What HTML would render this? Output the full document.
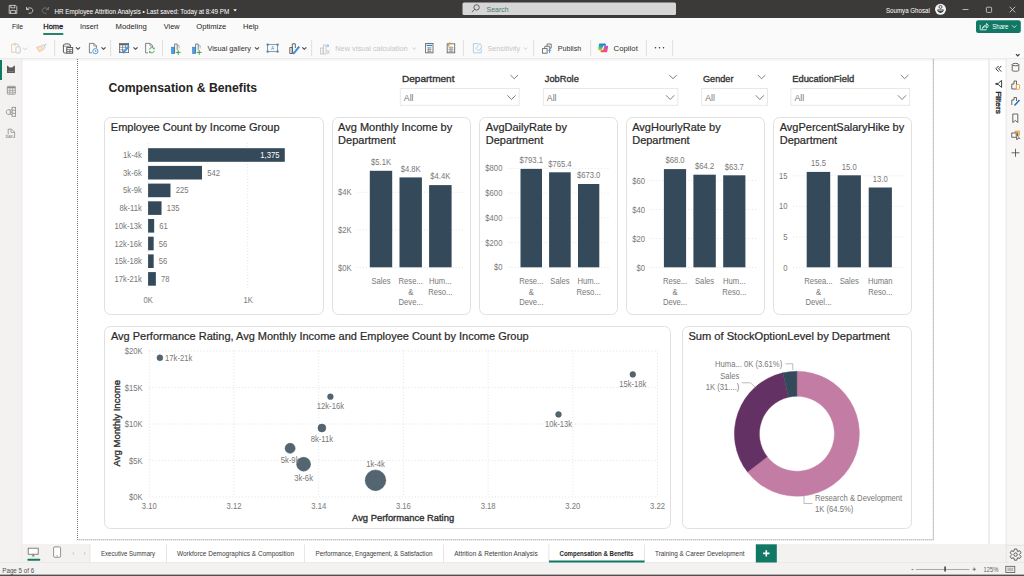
<!DOCTYPE html>
<html><head><meta charset="utf-8"><style>
html,body{margin:0;padding:0;width:1024px;height:576px;overflow:hidden;background:#fff;}
svg{display:block;font-family:"Liberation Sans", sans-serif;}
</style></head><body>
<svg width="1024" height="576" viewBox="0 0 1024 576">
<rect x="0" y="0" width="1024" height="576" fill="#ffffff" />
<rect x="0" y="0" width="1024" height="18" fill="#3b3a39" />
<rect x="0" y="18" width="1024" height="40" fill="#fafafa" />
<rect x="0" y="58.2" width="1024" height="1.2" fill="#e6e6e6" />
<rect x="0" y="59.4" width="1024" height="1.2" fill="#f4f4f4" />
<rect x="0" y="59" width="22" height="504" fill="#f3f2f1" />
<rect x="0" y="60" width="2" height="20" fill="#117865" />
<rect x="21.5" y="59" width="0.8" height="504" fill="#e6e4e2" />
<rect x="988.3" y="59" width="1.3" height="485" fill="#e6e4e2" />
<rect x="1006" y="59" width="18" height="485" fill="#f8f7f6" />
<rect x="1005.6" y="59" width="1.1" height="485" fill="#ebe9e7" />
<rect x="22" y="544" width="1002" height="18.5" fill="#f3f2f1" />
<rect x="90" y="544" width="686" height="18.5" fill="#ffffff" />
<rect x="0" y="562.5" width="1024" height="13" fill="#f3f2f1" />
<rect x="1005.8" y="544" width="0.9" height="18.5" fill="#e4e2e0" />
<rect x="1006" y="545.2" width="18" height="0.8" fill="#e4e2e0" />
<rect x="0" y="562" width="1024" height="0.7" fill="#e6e6e6" />
<rect x="0" y="574.6" width="1024" height="1.4" fill="#505050" />
<path d="M77.5 59 V539.8 H933.3 V59" fill="none" stroke="#7a7a7a" stroke-width="1" stroke-dasharray="1 1"/>
<text x="108.40" y="91.57" font-size="12.2" fill="#252423" text-anchor="start" font-weight="bold" textLength="148.80" lengthAdjust="spacingAndGlyphs" >Compensation &amp; Benefits</text>
<text x="402" y="81.8" font-size="9.4" fill="#333" stroke="#333" stroke-width="0.35" textLength="52.5" lengthAdjust="spacingAndGlyphs">Department</text>
<path d="M510.4 75 L514.1999999999999 78.7 L518.0 75" fill="none" stroke="#605e5c" stroke-width="0.8"/>
<rect x="400.3" y="88.5" width="118.90000000000003" height="16.8" fill="#fff" stroke="#e8e8e8" stroke-width="1"/>
<text x="403.80" y="100.95" font-size="8.8" fill="#797775" text-anchor="start" >All</text>
<path d="M507.40000000000003 95.3 L511.50000000000006 99.5 L515.6 95.3" fill="none" stroke="#605e5c" stroke-width="0.8"/>
<text x="544.8" y="81.8" font-size="9.4" fill="#333" stroke="#333" stroke-width="0.35" textLength="34" lengthAdjust="spacingAndGlyphs">JobRole</text>
<path d="M669.2 75 L673.0 78.7 L676.8000000000001 75" fill="none" stroke="#605e5c" stroke-width="0.8"/>
<rect x="543.3" y="88.5" width="134.60000000000002" height="16.8" fill="#fff" stroke="#e8e8e8" stroke-width="1"/>
<text x="546.80" y="100.95" font-size="8.8" fill="#797775" text-anchor="start" >All</text>
<path d="M666.1 95.3 L670.1999999999999 99.5 L674.3 95.3" fill="none" stroke="#605e5c" stroke-width="0.8"/>
<text x="703" y="81.8" font-size="9.4" fill="#333" stroke="#333" stroke-width="0.35" textLength="30.5" lengthAdjust="spacingAndGlyphs">Gender</text>
<path d="M757.8 75 L761.5999999999999 78.7 L765.4 75" fill="none" stroke="#605e5c" stroke-width="0.8"/>
<rect x="701.7" y="88.5" width="65.79999999999995" height="16.8" fill="#fff" stroke="#e8e8e8" stroke-width="1"/>
<text x="705.20" y="100.95" font-size="8.8" fill="#797775" text-anchor="start" >All</text>
<path d="M755.7 95.3 L759.8 99.5 L763.9 95.3" fill="none" stroke="#605e5c" stroke-width="0.8"/>
<text x="792.2" y="81.8" font-size="9.4" fill="#333" stroke="#333" stroke-width="0.35" textLength="62" lengthAdjust="spacingAndGlyphs">EducationField</text>
<path d="M900.8 75 L904.5999999999999 78.7 L908.4 75" fill="none" stroke="#605e5c" stroke-width="0.8"/>
<rect x="790.9" y="88.5" width="118.80000000000007" height="16.8" fill="#fff" stroke="#e8e8e8" stroke-width="1"/>
<text x="794.40" y="100.95" font-size="8.8" fill="#797775" text-anchor="start" >All</text>
<path d="M897.9000000000001 95.3 L902.0 99.5 L906.1 95.3" fill="none" stroke="#605e5c" stroke-width="0.8"/>
<rect x="104.5" y="117.5" width="219" height="197" rx="6" fill="#fff" stroke="#e0e0e0" stroke-width="1"/>
<rect x="332.5" y="117.5" width="138" height="197" rx="6" fill="#fff" stroke="#e0e0e0" stroke-width="1"/>
<rect x="479.5" y="117.5" width="138" height="197" rx="6" fill="#fff" stroke="#e0e0e0" stroke-width="1"/>
<rect x="626.5" y="117.5" width="138" height="197" rx="6" fill="#fff" stroke="#e0e0e0" stroke-width="1"/>
<rect x="773.5" y="117.5" width="138" height="197" rx="6" fill="#fff" stroke="#e0e0e0" stroke-width="1"/>
<rect x="104.5" y="326.5" width="566" height="202" rx="6" fill="#fff" stroke="#e0e0e0" stroke-width="1"/>
<rect x="682.5" y="326.5" width="229" height="202" rx="6" fill="#fff" stroke="#e0e0e0" stroke-width="1"/>
<text x="110.80" y="130.84" font-size="11" fill="#2b2a29" text-anchor="start" stroke="#2b2a29" stroke-width="0.22">Employee Count by Income Group</text>
<path d="M148.1 143 V290" stroke="#dcdcdc" stroke-width="0.8" stroke-dasharray="1 2"/>
<path d="M247.7 143 V290" stroke="#dcdcdc" stroke-width="0.8" stroke-dasharray="1 2"/>
<rect x="148.1" y="148.2" width="136.68" height="13.6" fill="#344959" />
<text x="141.80" y="158.08" font-size="8.6" fill="#787878" text-anchor="end" textLength="18.72" lengthAdjust="spacingAndGlyphs" >1k-4k</text>
<text x="279.50" y="158.08" font-size="8.6" fill="#ffffff" text-anchor="end" textLength="19.15" lengthAdjust="spacingAndGlyphs" >1,375</text>
<rect x="148.1" y="165.9" width="53.87" height="13.6" fill="#344959" />
<text x="141.80" y="175.78" font-size="8.6" fill="#787878" text-anchor="end" textLength="18.72" lengthAdjust="spacingAndGlyphs" >3k-6k</text>
<text x="207.17" y="175.78" font-size="8.6" fill="#787878" text-anchor="start" textLength="12.77" lengthAdjust="spacingAndGlyphs" >542</text>
<rect x="148.1" y="183.6" width="22.37" height="13.6" fill="#344959" />
<text x="141.80" y="193.48" font-size="8.6" fill="#787878" text-anchor="end" textLength="18.72" lengthAdjust="spacingAndGlyphs" >5k-9k</text>
<text x="175.66" y="193.48" font-size="8.6" fill="#787878" text-anchor="start" textLength="12.77" lengthAdjust="spacingAndGlyphs" >225</text>
<rect x="148.1" y="201.3" width="13.42" height="13.6" fill="#344959" />
<text x="141.80" y="211.18" font-size="8.6" fill="#787878" text-anchor="end" textLength="22.40" lengthAdjust="spacingAndGlyphs" >8k-11k</text>
<text x="166.72" y="211.18" font-size="8.6" fill="#787878" text-anchor="start" textLength="12.77" lengthAdjust="spacingAndGlyphs" >135</text>
<rect x="148.1" y="219.0" width="6.06" height="13.6" fill="#344959" />
<text x="141.80" y="228.88" font-size="8.6" fill="#787878" text-anchor="end" textLength="27.23" lengthAdjust="spacingAndGlyphs" >10k-13k</text>
<text x="159.36" y="228.88" font-size="8.6" fill="#787878" text-anchor="start" textLength="8.51" lengthAdjust="spacingAndGlyphs" >61</text>
<rect x="148.1" y="236.7" width="5.57" height="13.6" fill="#344959" />
<text x="141.80" y="246.58" font-size="8.6" fill="#787878" text-anchor="end" textLength="27.23" lengthAdjust="spacingAndGlyphs" >12k-16k</text>
<text x="158.87" y="246.58" font-size="8.6" fill="#787878" text-anchor="start" textLength="8.51" lengthAdjust="spacingAndGlyphs" >56</text>
<rect x="148.1" y="254.4" width="5.57" height="13.6" fill="#344959" />
<text x="141.80" y="264.28" font-size="8.6" fill="#787878" text-anchor="end" textLength="27.23" lengthAdjust="spacingAndGlyphs" >15k-18k</text>
<text x="158.87" y="264.28" font-size="8.6" fill="#787878" text-anchor="start" textLength="8.51" lengthAdjust="spacingAndGlyphs" >56</text>
<rect x="148.1" y="272.1" width="7.75" height="13.6" fill="#344959" />
<text x="141.80" y="281.98" font-size="8.6" fill="#787878" text-anchor="end" textLength="27.23" lengthAdjust="spacingAndGlyphs" >17k-21k</text>
<text x="161.05" y="281.98" font-size="8.6" fill="#787878" text-anchor="start" textLength="8.51" lengthAdjust="spacingAndGlyphs" >78</text>
<text x="148.30" y="303.08" font-size="8.6" fill="#787878" text-anchor="middle" textLength="9.36" lengthAdjust="spacingAndGlyphs" >0K</text>
<text x="248.30" y="303.08" font-size="8.6" fill="#787878" text-anchor="middle" textLength="9.36" lengthAdjust="spacingAndGlyphs" >1K</text>
<text x="338.10" y="130.84" font-size="11" fill="#2b2a29" text-anchor="start" stroke="#2b2a29" stroke-width="0.22">Avg Monthly Income by</text>
<text x="338.10" y="143.84" font-size="11" fill="#2b2a29" text-anchor="start" stroke="#2b2a29" stroke-width="0.22">Department</text>
<path d="M356.6 192.3 H463" stroke="#dcdcdc" stroke-width="0.8" stroke-dasharray="1 2.2"/>
<text x="351.50" y="195.38" font-size="8.6" fill="#787878" text-anchor="end" textLength="13.62" lengthAdjust="spacingAndGlyphs" >$4K</text>
<path d="M356.6 229.9 H463" stroke="#dcdcdc" stroke-width="0.8" stroke-dasharray="1 2.2"/>
<text x="351.50" y="232.98" font-size="8.6" fill="#787878" text-anchor="end" textLength="13.62" lengthAdjust="spacingAndGlyphs" >$2K</text>
<path d="M356.6 267.5 H463" stroke="#dcdcdc" stroke-width="0.8" stroke-dasharray="1 2.2"/>
<text x="351.50" y="270.58" font-size="8.6" fill="#787878" text-anchor="end" textLength="13.62" lengthAdjust="spacingAndGlyphs" >$0K</text>
<rect x="369.8" y="170.8" width="22.4" height="96.5" fill="#344959" />
<text x="381.00" y="165.18" font-size="8.6" fill="#787878" text-anchor="middle" textLength="20.00" lengthAdjust="spacingAndGlyphs" >$5.1K</text>
<text x="381.00" y="284.08" font-size="8.6" fill="#787878" text-anchor="middle" textLength="19.15" lengthAdjust="spacingAndGlyphs" >Sales</text>
<rect x="399.5" y="177.4" width="22.4" height="89.9" fill="#344959" />
<text x="410.70" y="171.78" font-size="8.6" fill="#787878" text-anchor="middle" textLength="20.00" lengthAdjust="spacingAndGlyphs" >$4.8K</text>
<text x="410.70" y="284.08" font-size="8.6" fill="#787878" text-anchor="middle" textLength="24.25" lengthAdjust="spacingAndGlyphs" >Rese...</text>
<text x="410.70" y="294.68" font-size="8.6" fill="#787878" text-anchor="middle" textLength="5.11" lengthAdjust="spacingAndGlyphs" >&amp;</text>
<text x="410.70" y="305.28" font-size="8.6" fill="#787878" text-anchor="middle" textLength="24.25" lengthAdjust="spacingAndGlyphs" >Deve...</text>
<rect x="429.1" y="185.1" width="22.5" height="82.2" fill="#344959" />
<text x="440.35" y="179.48" font-size="8.6" fill="#787878" text-anchor="middle" textLength="20.00" lengthAdjust="spacingAndGlyphs" >$4.4K</text>
<text x="440.35" y="284.08" font-size="8.6" fill="#787878" text-anchor="middle" textLength="22.54" lengthAdjust="spacingAndGlyphs" >Hum...</text>
<text x="440.35" y="294.68" font-size="8.6" fill="#787878" text-anchor="middle" textLength="24.25" lengthAdjust="spacingAndGlyphs" >Reso...</text>
<text x="485.80" y="130.84" font-size="11" fill="#2b2a29" text-anchor="start" stroke="#2b2a29" stroke-width="0.22">AvgDailyRate by</text>
<text x="485.80" y="143.84" font-size="11" fill="#2b2a29" text-anchor="start" stroke="#2b2a29" stroke-width="0.22">Department</text>
<path d="M508.3 168.4 H610.5" stroke="#dcdcdc" stroke-width="0.8" stroke-dasharray="1 2.2"/>
<text x="502.40" y="171.48" font-size="8.6" fill="#787878" text-anchor="end" textLength="17.03" lengthAdjust="spacingAndGlyphs" >$800</text>
<path d="M508.3 193.1 H610.5" stroke="#dcdcdc" stroke-width="0.8" stroke-dasharray="1 2.2"/>
<text x="502.40" y="196.18" font-size="8.6" fill="#787878" text-anchor="end" textLength="17.03" lengthAdjust="spacingAndGlyphs" >$600</text>
<path d="M508.3 217.8 H610.5" stroke="#dcdcdc" stroke-width="0.8" stroke-dasharray="1 2.2"/>
<text x="502.40" y="220.88" font-size="8.6" fill="#787878" text-anchor="end" textLength="17.03" lengthAdjust="spacingAndGlyphs" >$400</text>
<path d="M508.3 242.6 H610.5" stroke="#dcdcdc" stroke-width="0.8" stroke-dasharray="1 2.2"/>
<text x="502.40" y="245.68" font-size="8.6" fill="#787878" text-anchor="end" textLength="17.03" lengthAdjust="spacingAndGlyphs" >$200</text>
<path d="M508.3 267.4 H610.5" stroke="#dcdcdc" stroke-width="0.8" stroke-dasharray="1 2.2"/>
<text x="502.40" y="270.48" font-size="8.6" fill="#787878" text-anchor="end" textLength="8.51" lengthAdjust="spacingAndGlyphs" >$0</text>
<rect x="520.5" y="168.9" width="21.5" height="98.4" fill="#344959" />
<text x="531.25" y="163.28" font-size="8.6" fill="#787878" text-anchor="middle" textLength="23.41" lengthAdjust="spacingAndGlyphs" >$793.1</text>
<text x="531.25" y="284.08" font-size="8.6" fill="#787878" text-anchor="middle" textLength="24.25" lengthAdjust="spacingAndGlyphs" >Rese...</text>
<text x="531.25" y="294.68" font-size="8.6" fill="#787878" text-anchor="middle" textLength="5.11" lengthAdjust="spacingAndGlyphs" >&amp;</text>
<text x="531.25" y="305.28" font-size="8.6" fill="#787878" text-anchor="middle" textLength="24.25" lengthAdjust="spacingAndGlyphs" >Deve...</text>
<rect x="549.1" y="172.3" width="21.6" height="95.0" fill="#344959" />
<text x="559.90" y="166.68" font-size="8.6" fill="#787878" text-anchor="middle" textLength="23.41" lengthAdjust="spacingAndGlyphs" >$765.4</text>
<text x="559.90" y="284.08" font-size="8.6" fill="#787878" text-anchor="middle" textLength="19.15" lengthAdjust="spacingAndGlyphs" >Sales</text>
<rect x="578" y="184" width="21.3" height="83.3" fill="#344959" />
<text x="588.65" y="178.38" font-size="8.6" fill="#787878" text-anchor="middle" textLength="23.41" lengthAdjust="spacingAndGlyphs" >$673.0</text>
<text x="588.65" y="284.08" font-size="8.6" fill="#787878" text-anchor="middle" textLength="22.54" lengthAdjust="spacingAndGlyphs" >Hum...</text>
<text x="588.65" y="294.68" font-size="8.6" fill="#787878" text-anchor="middle" textLength="24.25" lengthAdjust="spacingAndGlyphs" >Reso...</text>
<text x="632.20" y="130.84" font-size="11" fill="#2b2a29" text-anchor="start" stroke="#2b2a29" stroke-width="0.22">AvgHourlyRate by</text>
<text x="632.20" y="143.84" font-size="11" fill="#2b2a29" text-anchor="start" stroke="#2b2a29" stroke-width="0.22">Department</text>
<path d="M649.5 180.5 H757" stroke="#dcdcdc" stroke-width="0.8" stroke-dasharray="1 2.2"/>
<text x="644.90" y="183.58" font-size="8.6" fill="#787878" text-anchor="end" textLength="12.77" lengthAdjust="spacingAndGlyphs" >$60</text>
<path d="M649.5 209.5 H757" stroke="#dcdcdc" stroke-width="0.8" stroke-dasharray="1 2.2"/>
<text x="644.90" y="212.58" font-size="8.6" fill="#787878" text-anchor="end" textLength="12.77" lengthAdjust="spacingAndGlyphs" >$40</text>
<path d="M649.5 238.5 H757" stroke="#dcdcdc" stroke-width="0.8" stroke-dasharray="1 2.2"/>
<text x="644.90" y="241.58" font-size="8.6" fill="#787878" text-anchor="end" textLength="12.77" lengthAdjust="spacingAndGlyphs" >$20</text>
<path d="M649.5 267.5 H757" stroke="#dcdcdc" stroke-width="0.8" stroke-dasharray="1 2.2"/>
<text x="644.90" y="270.58" font-size="8.6" fill="#787878" text-anchor="end" textLength="8.51" lengthAdjust="spacingAndGlyphs" >$0</text>
<rect x="663.9" y="169.1" width="22.2" height="98.2" fill="#344959" />
<text x="675.00" y="163.48" font-size="8.6" fill="#787878" text-anchor="middle" textLength="19.15" lengthAdjust="spacingAndGlyphs" >$68.0</text>
<text x="675.00" y="284.08" font-size="8.6" fill="#787878" text-anchor="middle" textLength="24.25" lengthAdjust="spacingAndGlyphs" >Rese...</text>
<text x="675.00" y="294.68" font-size="8.6" fill="#787878" text-anchor="middle" textLength="5.11" lengthAdjust="spacingAndGlyphs" >&amp;</text>
<text x="675.00" y="305.28" font-size="8.6" fill="#787878" text-anchor="middle" textLength="24.25" lengthAdjust="spacingAndGlyphs" >Deve...</text>
<rect x="693.4" y="174.7" width="22.4" height="92.6" fill="#344959" />
<text x="704.60" y="169.08" font-size="8.6" fill="#787878" text-anchor="middle" textLength="19.15" lengthAdjust="spacingAndGlyphs" >$64.2</text>
<text x="704.60" y="284.08" font-size="8.6" fill="#787878" text-anchor="middle" textLength="19.15" lengthAdjust="spacingAndGlyphs" >Sales</text>
<rect x="723.2" y="175.3" width="22.2" height="92.0" fill="#344959" />
<text x="734.30" y="169.68" font-size="8.6" fill="#787878" text-anchor="middle" textLength="19.15" lengthAdjust="spacingAndGlyphs" >$63.7</text>
<text x="734.30" y="284.08" font-size="8.6" fill="#787878" text-anchor="middle" textLength="22.54" lengthAdjust="spacingAndGlyphs" >Hum...</text>
<text x="734.30" y="294.68" font-size="8.6" fill="#787878" text-anchor="middle" textLength="24.25" lengthAdjust="spacingAndGlyphs" >Reso...</text>
<text x="779.70" y="130.84" font-size="11" fill="#2b2a29" text-anchor="start" stroke="#2b2a29" stroke-width="0.22">AvgPercentSalaryHike by</text>
<text x="779.70" y="143.84" font-size="11" fill="#2b2a29" text-anchor="start" stroke="#2b2a29" stroke-width="0.22">Department</text>
<path d="M793 175.8 H905" stroke="#dcdcdc" stroke-width="0.8" stroke-dasharray="1 2.2"/>
<text x="787.60" y="178.88" font-size="8.6" fill="#787878" text-anchor="end" textLength="8.51" lengthAdjust="spacingAndGlyphs" >15</text>
<path d="M793 206.4 H905" stroke="#dcdcdc" stroke-width="0.8" stroke-dasharray="1 2.2"/>
<text x="787.60" y="209.48" font-size="8.6" fill="#787878" text-anchor="end" textLength="8.51" lengthAdjust="spacingAndGlyphs" >10</text>
<path d="M793 237 H905" stroke="#dcdcdc" stroke-width="0.8" stroke-dasharray="1 2.2"/>
<text x="787.60" y="240.08" font-size="8.6" fill="#787878" text-anchor="end" textLength="4.26" lengthAdjust="spacingAndGlyphs" >5</text>
<path d="M793 267.5 H905" stroke="#dcdcdc" stroke-width="0.8" stroke-dasharray="1 2.2"/>
<text x="787.60" y="270.58" font-size="8.6" fill="#787878" text-anchor="end" textLength="4.26" lengthAdjust="spacingAndGlyphs" >0</text>
<rect x="806.7" y="171.9" width="23.5" height="95.4" fill="#344959" />
<text x="818.45" y="166.28" font-size="8.6" fill="#787878" text-anchor="middle" textLength="14.90" lengthAdjust="spacingAndGlyphs" >15.5</text>
<text x="818.45" y="284.08" font-size="8.6" fill="#787878" text-anchor="middle" textLength="28.50" lengthAdjust="spacingAndGlyphs" >Resea...</text>
<text x="818.45" y="294.68" font-size="8.6" fill="#787878" text-anchor="middle" textLength="5.11" lengthAdjust="spacingAndGlyphs" >&amp;</text>
<text x="818.45" y="305.28" font-size="8.6" fill="#787878" text-anchor="middle" textLength="25.95" lengthAdjust="spacingAndGlyphs" >Devel...</text>
<rect x="837.7" y="175.3" width="23.2" height="92.0" fill="#344959" />
<text x="849.30" y="169.68" font-size="8.6" fill="#787878" text-anchor="middle" textLength="14.90" lengthAdjust="spacingAndGlyphs" >15.0</text>
<text x="849.30" y="284.08" font-size="8.6" fill="#787878" text-anchor="middle" textLength="19.15" lengthAdjust="spacingAndGlyphs" >Sales</text>
<rect x="868.7" y="187.5" width="23.2" height="79.8" fill="#344959" />
<text x="880.30" y="181.88" font-size="8.6" fill="#787878" text-anchor="middle" textLength="14.90" lengthAdjust="spacingAndGlyphs" >13.0</text>
<text x="880.30" y="284.08" font-size="8.6" fill="#787878" text-anchor="middle" textLength="24.67" lengthAdjust="spacingAndGlyphs" >Human</text>
<text x="880.30" y="294.68" font-size="8.6" fill="#787878" text-anchor="middle" textLength="24.25" lengthAdjust="spacingAndGlyphs" >Reso...</text>
<text x="110.90" y="339.74" font-size="11" fill="#2b2a29" text-anchor="start" stroke="#2b2a29" stroke-width="0.22">Avg Performance Rating, Avg Monthly Income and Employee Count by Income Group</text>
<path d="M149.3 350 V497" stroke="#dcdcdc" stroke-width="0.8" stroke-dasharray="1 2.2"/>
<text x="149.30" y="508.68" font-size="8.6" fill="#787878" text-anchor="middle" textLength="14.90" lengthAdjust="spacingAndGlyphs" >3.10</text>
<path d="M234.0 350 V497" stroke="#dcdcdc" stroke-width="0.8" stroke-dasharray="1 2.2"/>
<text x="234.00" y="508.68" font-size="8.6" fill="#787878" text-anchor="middle" textLength="14.90" lengthAdjust="spacingAndGlyphs" >3.12</text>
<path d="M318.7 350 V497" stroke="#dcdcdc" stroke-width="0.8" stroke-dasharray="1 2.2"/>
<text x="318.70" y="508.68" font-size="8.6" fill="#787878" text-anchor="middle" textLength="14.90" lengthAdjust="spacingAndGlyphs" >3.14</text>
<path d="M403.4 350 V497" stroke="#dcdcdc" stroke-width="0.8" stroke-dasharray="1 2.2"/>
<text x="403.40" y="508.68" font-size="8.6" fill="#787878" text-anchor="middle" textLength="14.90" lengthAdjust="spacingAndGlyphs" >3.16</text>
<path d="M488.1 350 V497" stroke="#dcdcdc" stroke-width="0.8" stroke-dasharray="1 2.2"/>
<text x="488.10" y="508.68" font-size="8.6" fill="#787878" text-anchor="middle" textLength="14.90" lengthAdjust="spacingAndGlyphs" >3.18</text>
<path d="M572.8 350 V497" stroke="#dcdcdc" stroke-width="0.8" stroke-dasharray="1 2.2"/>
<text x="572.80" y="508.68" font-size="8.6" fill="#787878" text-anchor="middle" textLength="14.90" lengthAdjust="spacingAndGlyphs" >3.20</text>
<path d="M657.5 350 V497" stroke="#dcdcdc" stroke-width="0.8" stroke-dasharray="1 2.2"/>
<text x="657.50" y="508.68" font-size="8.6" fill="#787878" text-anchor="middle" textLength="14.90" lengthAdjust="spacingAndGlyphs" >3.22</text>
<path d="M149.3 351.0 H657.5" stroke="#dcdcdc" stroke-width="0.8" stroke-dasharray="1 2.2"/>
<text x="142.50" y="354.08" font-size="8.6" fill="#787878" text-anchor="end" textLength="17.87" lengthAdjust="spacingAndGlyphs" >$20K</text>
<path d="M149.3 387.5 H657.5" stroke="#dcdcdc" stroke-width="0.8" stroke-dasharray="1 2.2"/>
<text x="142.50" y="390.58" font-size="8.6" fill="#787878" text-anchor="end" textLength="17.87" lengthAdjust="spacingAndGlyphs" >$15K</text>
<path d="M149.3 424.0 H657.5" stroke="#dcdcdc" stroke-width="0.8" stroke-dasharray="1 2.2"/>
<text x="142.50" y="427.08" font-size="8.6" fill="#787878" text-anchor="end" textLength="17.87" lengthAdjust="spacingAndGlyphs" >$10K</text>
<path d="M149.3 460.5 H657.5" stroke="#dcdcdc" stroke-width="0.8" stroke-dasharray="1 2.2"/>
<text x="142.50" y="463.58" font-size="8.6" fill="#787878" text-anchor="end" textLength="13.62" lengthAdjust="spacingAndGlyphs" >$5K</text>
<path d="M149.3 497.0 H657.5" stroke="#dcdcdc" stroke-width="0.8" stroke-dasharray="1 2.2"/>
<text x="142.50" y="500.08" font-size="8.6" fill="#787878" text-anchor="end" textLength="13.62" lengthAdjust="spacingAndGlyphs" >$0K</text>
<text x="0" y="0" font-size="9.8" fill="#333" stroke="#333" stroke-width="0.38" text-anchor="middle" transform="translate(120.4 423.2) rotate(-90)" textLength="86.5" lengthAdjust="spacingAndGlyphs">Avg Monthly Income</text>
<text x="403.1" y="520.9" font-size="9.6" fill="#333" stroke="#333" stroke-width="0.38" text-anchor="middle" textLength="102" lengthAdjust="spacingAndGlyphs">Avg Performance Rating</text>
<circle cx="159.9" cy="357.8" r="2.95" fill="#546572" stroke="#44555f" stroke-width="0.5"/>
<circle cx="330.4" cy="396.7" r="2.85" fill="#546572" stroke="#44555f" stroke-width="0.5"/>
<circle cx="321.9" cy="428" r="3.95" fill="#546572" stroke="#44555f" stroke-width="0.5"/>
<circle cx="290.1" cy="448.3" r="5.05" fill="#546572" stroke="#44555f" stroke-width="0.5"/>
<circle cx="303.6" cy="464.2" r="6.95" fill="#546572" stroke="#44555f" stroke-width="0.5"/>
<circle cx="375.5" cy="480.3" r="10.35" fill="#546572" stroke="#44555f" stroke-width="0.5"/>
<circle cx="632.8" cy="374.4" r="2.85" fill="#546572" stroke="#44555f" stroke-width="0.5"/>
<circle cx="558.5" cy="414.4" r="2.85" fill="#546572" stroke="#44555f" stroke-width="0.5"/>
<text x="165.10" y="360.88" font-size="8.6" fill="#787878" text-anchor="start" textLength="27.23" lengthAdjust="spacingAndGlyphs" >17k-21k</text>
<text x="330.40" y="409.48" font-size="8.6" fill="#787878" text-anchor="middle" textLength="27.23" lengthAdjust="spacingAndGlyphs" >12k-16k</text>
<text x="321.90" y="441.88" font-size="8.6" fill="#787878" text-anchor="middle" textLength="22.40" lengthAdjust="spacingAndGlyphs" >8k-11k</text>
<text x="290.10" y="463.28" font-size="8.6" fill="#787878" text-anchor="middle" textLength="18.72" lengthAdjust="spacingAndGlyphs" >5k-9k</text>
<text x="303.60" y="481.08" font-size="8.6" fill="#787878" text-anchor="middle" textLength="18.72" lengthAdjust="spacingAndGlyphs" >3k-6k</text>
<text x="375.50" y="467.28" font-size="8.6" fill="#787878" text-anchor="middle" textLength="18.72" lengthAdjust="spacingAndGlyphs" >1k-4k</text>
<text x="632.80" y="387.18" font-size="8.6" fill="#787878" text-anchor="middle" textLength="27.23" lengthAdjust="spacingAndGlyphs" >15k-18k</text>
<text x="558.50" y="427.18" font-size="8.6" fill="#787878" text-anchor="middle" textLength="27.23" lengthAdjust="spacingAndGlyphs" >10k-13k</text>
<text x="688.40" y="339.74" font-size="11" fill="#2b2a29" text-anchor="start" textLength="201.50" lengthAdjust="spacingAndGlyphs" stroke="#2b2a29" stroke-width="0.22">Sum of StockOptionLevel by Department</text>
<path d="M796.90 371.25 A62.5 62.5 0 1 1 747.52 472.06 L767.27 456.73 A37.5 37.5 0 1 0 796.90 396.25 Z" fill="#c37ca3" stroke="#c37ca3" stroke-width="0.4"/>
<path d="M747.52 472.06 A62.5 62.5 0 0 1 782.84 372.85 L788.47 397.21 A37.5 37.5 0 0 0 767.27 456.73 Z" fill="#633163" stroke="#633163" stroke-width="0.4"/>
<path d="M782.84 372.85 A62.5 62.5 0 0 1 796.90 371.25 L796.90 396.25 A37.5 37.5 0 0 0 788.47 397.21 Z" fill="#344959" stroke="#344959" stroke-width="0.4"/>
<path d="M785.5 363.8 H792.8 V370" fill="none" stroke="#a0a0a0" stroke-width="0.7"/>
<text x="782.20" y="366.88" font-size="8.6" fill="#787878" text-anchor="end" textLength="67.21" lengthAdjust="spacingAndGlyphs" >Huma... 0K (3.61%)</text>
<text x="739.40" y="379.38" font-size="8.6" fill="#787878" text-anchor="end" textLength="19.15" lengthAdjust="spacingAndGlyphs" >Sales</text>
<text x="739.40" y="390.28" font-size="8.6" fill="#787878" text-anchor="end" textLength="33.60" lengthAdjust="spacingAndGlyphs" >1K (31....)</text>
<path d="M741.8 382.8 H750.5 L755.5 387.5" fill="none" stroke="#a0a0a0" stroke-width="0.7"/>
<path d="M804 496 V503.5 H812.5" fill="none" stroke="#a0a0a0" stroke-width="0.7"/>
<text x="815.00" y="501.18" font-size="8.6" fill="#787878" text-anchor="start" textLength="87.21" lengthAdjust="spacingAndGlyphs" >Research &amp; Development</text>
<text x="815.00" y="512.08" font-size="8.6" fill="#787878" text-anchor="start" textLength="38.29" lengthAdjust="spacingAndGlyphs" >1K (64.5%)</text>
<g fill="none" stroke="#cfcfcf" stroke-width="0.9"><path d="M9.2 5.4 H15.6 L16.8 6.6 V13.4 H9.2 Z"/><path d="M10.8 5.4 V7.8 H14.8 V5.4"/><path d="M10.6 13.4 V10.4 H15.4 V13.4"/></g>
<g fill="none" stroke="#cfcfcf" stroke-width="0.9"><path d="M26.5 7 V9.6 H29"/><path d="M26.6 9.5 C28 7.2 32.6 7.2 32.8 10.4 C33 12.6 30.6 13.6 28.6 13.2"/></g>
<g fill="none" stroke="#777" stroke-width="0.9"><path d="M48.5 7 V9.6 H46"/><path d="M48.4 9.5 C47 7.2 42.4 7.2 42.2 10.4 C42 12.6 44.4 13.6 46.4 13.2"/></g>
<text x="54.50" y="13.53" font-size="6.8" fill="#ffffff" text-anchor="start" textLength="174.75" lengthAdjust="spacingAndGlyphs" >HR Employee Attrition Analysis • Last saved: Today at 8:49 PM</text>
<path d="M233.3 9.2 H236.9 L235.1 11.6 Z" fill="#fff"/>
<rect x="462.5" y="2.5" width="213.5" height="12.5" rx="1.5" fill="#d6d6d6"/>
<g fill="none" stroke="#555" stroke-width="0.9"><circle cx="476.6" cy="7.4" r="2.7"/><path d="M474.7 9.3 L471.9 12.2"/></g>
<text x="486.60" y="11.72" font-size="7.6" fill="#3f7a6c" text-anchor="start" textLength="22.10" lengthAdjust="spacingAndGlyphs" >Search</text>
<text x="886.00" y="13.03" font-size="6.8" fill="#ffffff" text-anchor="start" textLength="43.75" lengthAdjust="spacingAndGlyphs" >Soumya Ghosal</text>
<circle cx="940.5" cy="9.3" r="5.5" fill="#f4f4f4"/><circle cx="940.5" cy="6.9" r="1.5" fill="none" stroke="#3b3a39" stroke-width="0.9"/><path d="M937.2 9.6 H943.8 C943.8 11.6 942.3 12.9 940.5 12.9 C938.7 12.9 937.2 11.6 937.2 9.6 Z" fill="#3b3a39"/><path d="M938.4 10.6 H942.6" stroke="#f4f4f4" stroke-width="0.6"/>
<path d="M962.5 9.5 H968.5" stroke="#d4d4d4" stroke-width="0.8"/>
<rect x="986.4" y="7.2" width="5.2" height="5.2" rx="0.8" fill="none" stroke="#d4d4d4" stroke-width="0.8"/>
<path d="M1009.6 6.8 L1015.2 12.4 M1015.2 6.8 L1009.6 12.4" stroke="#d4d4d4" stroke-width="0.85"/>
<text x="12.00" y="29.29" font-size="7.8" fill="#252423" text-anchor="start" textLength="11.00" lengthAdjust="spacingAndGlyphs" >File</text>
<text x="43.25" y="29.29" font-size="7.8" fill="#252423" text-anchor="start" textLength="20.00" lengthAdjust="spacingAndGlyphs" stroke="#252423" stroke-width="0.3">Home</text>
<text x="80.00" y="29.29" font-size="7.8" fill="#252423" text-anchor="start" textLength="18.25" lengthAdjust="spacingAndGlyphs" >Insert</text>
<text x="115.50" y="29.29" font-size="7.8" fill="#252423" text-anchor="start" textLength="31.25" lengthAdjust="spacingAndGlyphs" >Modeling</text>
<text x="163.75" y="29.29" font-size="7.8" fill="#252423" text-anchor="start" textLength="15.75" lengthAdjust="spacingAndGlyphs" >View</text>
<text x="196.25" y="29.29" font-size="7.8" fill="#252423" text-anchor="start" textLength="30.00" lengthAdjust="spacingAndGlyphs" >Optimize</text>
<text x="243.00" y="29.29" font-size="7.8" fill="#252423" text-anchor="start" textLength="15.50" lengthAdjust="spacingAndGlyphs" >Help</text>
<rect x="43" y="33" width="20.5" height="2" fill="#23856c" rx="1"/>
<rect x="976" y="20.3" width="44.8" height="12.7" rx="2.2" fill="#117865"/>
<g fill="none" stroke="#fff" stroke-width="0.8"><path d="M980.2 24.8 V29.8 H986.2 V29"/><path d="M982.3 28.6 C982.8 26.3 984.6 25.2 986.6 25.2 V23.4 L988.5 25.9 L986.6 28.2 V26.6 C985 26.6 983.6 27.2 982.3 28.6 Z"/></g>
<text x="992.30" y="29.15" font-size="7.4" fill="#ffffff" text-anchor="start" textLength="16.20" lengthAdjust="spacingAndGlyphs" >Share</text>
<path d="M1012 25.4 L1014.2 27.6 L1016.4 25.4" fill="none" stroke="#fff" stroke-width="0.8"/>
<rect x="54.2" y="40" width="1" height="16" fill="#e1dfdd" />
<rect x="110.1" y="40" width="1" height="16" fill="#e1dfdd" />
<rect x="162.0" y="40" width="1" height="16" fill="#e1dfdd" />
<rect x="311.1" y="40" width="1" height="16" fill="#e1dfdd" />
<rect x="462.9" y="40" width="1" height="16" fill="#e1dfdd" />
<rect x="533.1" y="40" width="1" height="16" fill="#e1dfdd" />
<rect x="590.1" y="40" width="1" height="16" fill="#e1dfdd" />
<rect x="645.9" y="40" width="1" height="16" fill="#e1dfdd" />
<rect x="672.1" y="40" width="1" height="16" fill="#e1dfdd" />
<g fill="none" stroke="#f2c79a" stroke-width="0.9"><path d="M14 44.3 H11.6 V52.3 H15.3 M16.5 44.3 H18.6 V46.3"/></g><g fill="none" stroke="#c4c4c4" stroke-width="0.9"><rect x="15.9" y="46.8" width="4.3" height="6.2" rx="0.8"/><circle cx="15.2" cy="44.2" r="1"/></g>
<path d="M22.8 47.6 L25.05 49.85 L27.3 47.6" fill="none" stroke="#c8c8c8" stroke-width="0.8"/>
<path d="M36.5 47.3 L40.8 46.3 L43 49.8 L39.3 51.8 Z" fill="#fbe3cc" stroke="#f2b47c" stroke-width="0.7"/><path d="M40.8 46.3 L43.5 44.8 L45.2 47.5 L43 49.8" fill="#e8e8e8" stroke="#c4c4c4" stroke-width="0.7"/><path d="M44.3 46 L46.2 43.9" stroke="#c4c4c4" stroke-width="1.1"/>
<g fill="none" stroke="#444" stroke-width="0.9"><path d="M63.4 52 V45.2 C63.4 43.4 70.4 43.4 70.4 45.2 V47.4"/><path d="M63.4 45.2 C63.4 46.8 70.4 46.8 70.4 45.2" stroke-width="0.6"/><path d="M63.4 52 C63.4 52.8 64.8 53.1 66.6 53.2"/></g><rect x="66.8" y="47.6" width="5.9" height="5.6" fill="#fafafa" stroke="#444" stroke-width="0.9"/><path d="M66.8 49.6 H72.7 M66.8 51.5 H72.7 M69.75 49.6 V53.2" stroke="#444" stroke-width="0.6"/>
<path d="M76 47.3 L78.0 49.3 L80 47.3" fill="none" stroke="#444" stroke-width="1.15"/>
<g fill="none" stroke="#666" stroke-width="0.8"><path d="M92 52.8 H89.4 V43.4 H94 L96.4 45.8 V48.3"/><path d="M93.8 43.4 V46 H96.4" stroke-width="0.6"/></g><circle cx="95.4" cy="51.2" r="2.6" fill="#fafafa" stroke="#3d92e0" stroke-width="0.9"/><path d="M95.4 50 V51.4 H96.5" fill="none" stroke="#555" stroke-width="0.6"/>
<path d="M101.5 47.3 L103.5 49.3 L105.5 47.3" fill="none" stroke="#444" stroke-width="1.15"/>
<g fill="none" stroke="#666" stroke-width="0.8"><rect x="119.4" y="43.4" width="9.2" height="9.2"/><path d="M119.4 44.5 H128.6" stroke-width="1.6"/><path d="M122.5 45 V52.6 M125.5 45 V48 M119.4 47.3 H126.5 M119.4 49.8 H124 M119.4 52 H121.5" stroke-width="0.6"/></g><path d="M122.6 53 L128.9 46.2" stroke="#3d92e0" stroke-width="2.2"/><path d="M123.8 51.1 L124.4 50.5 M125.3 49.5 L125.9 48.9 M126.8 47.9 L127.4 47.3" stroke="#d0e8ff" stroke-width="0.5"/>
<path d="M133.5 47.3 L135.5 49.3 L137.5 47.3" fill="none" stroke="#444" stroke-width="1.15"/>
<g fill="none" stroke="#666" stroke-width="0.8"><path d="M148 52.8 H145.6 V43.4 H150.2 L152.6 45.8 V47"/><path d="M150 43.4 V46 H152.6" stroke-width="0.6"/></g><g fill="none" stroke="#3aa050" stroke-width="0.9"><path d="M149.2 49.6 A2.9 2.9 0 0 1 154.2 48.6"/><path d="M154.4 50.8 A2.9 2.9 0 0 1 149.4 51.8"/></g><path d="M154.6 47.2 V49.2 H152.6 Z M149 53.2 V51.2 H151 Z" fill="#3aa050"/>
<g><rect x="171.6" y="47.2" width="2.8" height="6.4" fill="#4a9de6" stroke="#2b7fd0" stroke-width="0.6"/><path d="M174.6 53.6 V44 H177.2 V50" fill="none" stroke="#666" stroke-width="0.8"/><path d="M177.2 45.6 H179.2 V48.5" fill="none" stroke="#888" stroke-width="0.6"/><path d="M178.2 50 V54.8 M175.8 52.4 H180.6" stroke="#3aa050" stroke-width="1"/></g>
<g><rect x="192.6" y="47.2" width="2.8" height="6.4" fill="#4a9de6" stroke="#2b7fd0" stroke-width="0.6"/><path d="M195.6 53.6 V44 H198.2 V50" fill="none" stroke="#666" stroke-width="0.8"/><path d="M198.2 45.6 H200.2 V48.5" fill="none" stroke="#888" stroke-width="0.6"/><path d="M199.2 50 V54.8 M196.8 52.4 H201.6" stroke="#3aa050" stroke-width="1"/></g>
<text x="207.50" y="50.86" font-size="8" fill="#323130" text-anchor="start" textLength="43.30" lengthAdjust="spacingAndGlyphs" >Visual gallery</text>
<path d="M255 47.3 L257.0 49.3 L259 47.3" fill="none" stroke="#444" stroke-width="1.15"/>
<rect x="267.6" y="44.6" width="10" height="7" fill="none" stroke="#8a8a8a" stroke-width="0.9"/>
<rect x="266.6" y="43.6" width="2" height="2" fill="#2b88d8"/>
<rect x="276.6" y="43.6" width="2" height="2" fill="#2b88d8"/>
<rect x="266.6" y="50.6" width="2" height="2" fill="#2b88d8"/>
<rect x="276.6" y="50.6" width="2" height="2" fill="#2b88d8"/>
<text x="272.60" y="49.75" font-size="4.6" fill="#2b88d8" text-anchor="middle" >A</text>
<g fill="none" stroke="#555" stroke-width="0.9"><path d="M289.8 53.5 V47.5 H292.3 V53.5 Z"/><path d="M292.3 53.5 V43.8 H295.3 V48"/></g><path d="M293.2 53.8 L299.2 46.6" stroke="#2b88d8" stroke-width="2"/><path d="M294.2 52.2 L295 51.4 M295.6 50.6 L296.4 49.8 M297 48.8 L297.8 48" stroke="#bfe0ff" stroke-width="0.5"/>
<path d="M302.3 47.3 L304.3 49.3 L306.3 47.3" fill="none" stroke="#444" stroke-width="1.15"/>
<g fill="none" stroke="#c8c8c8" stroke-width="0.9"><rect x="320.5" y="48" width="2.5" height="6"/><rect x="323.5" y="45" width="2.5" height="9"/><path d="M327 50 L329.5 54 M329.5 50 L327 54"/></g><rect x="326.5" y="44.5" width="2.5" height="2.5" fill="#a8c8e8"/>
<text x="335.30" y="50.86" font-size="8" fill="#c6c6c6" text-anchor="start" textLength="72.40" lengthAdjust="spacingAndGlyphs" >New visual calculation</text>
<path d="M412.3 47.5 L414.2 49.4 L416.1 47.5" fill="none" stroke="#c8c8c8" stroke-width="0.8"/>
<g><rect x="425.6" y="43.5" width="7.4" height="9.3" fill="#fff" stroke="#666" stroke-width="0.9"/><rect x="426.6" y="44.8" width="5.4" height="1.3" fill="#2b88d8"/><path d="M427 47.8 H431.6 M427 49.6 H431.6 M427 51.4 H431.6 M428.5 47.3 V52 M430.1 47.3 V52" stroke="#777" stroke-width="0.6"/></g>
<g><rect x="447.2" y="43.8" width="7.5" height="9" fill="#fff" stroke="#666" stroke-width="0.9"/><path d="M448.5 47.8 H453.5 M448.5 49.6 H453.5 M448.5 51.4 H453.5 M450.1 46.3 V52 M451.9 46.3 V52" stroke="#777" stroke-width="0.6"/><path d="M449.6 42.2 L447 45.6 H448.8 L446.6 48.4 L450.4 44.8 H448.6 L450.6 42.2 Z" fill="#e8901a"/></g>
<g fill="none" stroke="#a8cbe8" stroke-width="0.9"><path d="M473.4 43.6 H478.5 M473.4 43.6 V52.8 H481.3 V48.5"/><path d="M476 48.5 L478.5 51 L481.8 46.8 L480.2 43.6 L478.3 45.4 Z"/></g>
<text x="487.40" y="50.86" font-size="8" fill="#c6c6c6" text-anchor="start" textLength="32.80" lengthAdjust="spacingAndGlyphs" >Sensitivity</text>
<path d="M523.7 47.5 L525.6 49.4 L527.5 47.5" fill="none" stroke="#c8c8c8" stroke-width="0.8"/>
<g fill="none" stroke="#6a6a6a" stroke-width="0.9"><rect x="542.5" y="48.6" width="4.6" height="4.6"/><path d="M544.8 48.6 V46.3 H547.1 V44 H551.2 V48.2 H549.4"/><path d="M547.1 46.3 H549.4 V48.6"/></g><path d="M549.6 53 V49.3 M548.1 50.8 L549.6 49.3 L551.1 50.8" fill="none" stroke="#2b88d8" stroke-width="0.9"/>
<text x="557.80" y="50.86" font-size="8" fill="#323130" text-anchor="start" textLength="23.40" lengthAdjust="spacingAndGlyphs" >Publish</text>
<defs><linearGradient id="cpa" x1="0.3" y1="0" x2="0" y2="1"><stop offset="0" stop-color="#1f7fe8"/><stop offset="0.55" stop-color="#3cc070"/><stop offset="1" stop-color="#e8c820"/></linearGradient><linearGradient id="cpb" x1="1" y1="0" x2="0" y2="1"><stop offset="0" stop-color="#a04ee8"/><stop offset="0.5" stop-color="#f0508a"/><stop offset="1" stop-color="#f05a20"/></linearGradient></defs>
<path d="M599.8 43.6 H604.6 C605.6 43.6 606.1 44.2 605.9 45 L605.7 45.8 H604 C603.5 45.8 603.2 46.1 603 46.5 L601.6 50.2 H599 C598.4 50.2 598.1 49.8 598.2 49.2 L598.9 44.5 C599 44 599.3 43.6 599.8 43.6 Z" fill="url(#cpa)"/>
<path d="M604.4 45.8 H607.2 C607.8 45.8 608.1 46.3 608 46.9 L607.3 51.2 C607.2 51.8 606.8 52.2 606.2 52.2 H601.4 C600.7 52.2 600.4 51.7 600.6 51.1 L600.9 50.2 H602.4 C602.8 50.2 603.1 49.9 603.3 49.5 L604.4 45.8 Z" fill="url(#cpb)"/>
<text x="613.60" y="50.86" font-size="8" fill="#323130" text-anchor="start" textLength="24.20" lengthAdjust="spacingAndGlyphs" >Copilot</text>
<circle cx="655.5" cy="47.8" r="0.75" fill="#333"/>
<circle cx="659.5" cy="47.8" r="0.75" fill="#333"/>
<circle cx="663.5" cy="47.8" r="0.75" fill="#333"/>
<path d="M1016 54.2 L1017.75 55.95 L1019.5 54.2" fill="none" stroke="#333" stroke-width="1.15"/>
<g><path d="M7 65.6 L8.2 66.2 L9.6 67.6 H11 L12.6 67.2 L13.8 66 L14.9 65.6 V72.9 H7 Z" fill="#5a5a5a"/><circle cx="9" cy="71.3" r="0.45" fill="#ddd"/><circle cx="11" cy="71.3" r="0.45" fill="#ddd"/><circle cx="13" cy="71.3" r="0.45" fill="#ddd"/></g>
<g fill="none" stroke="#8a8a8a" stroke-width="0.8"><rect x="7.3" y="86.3" width="8" height="7.9" rx="0.5"/><path d="M7.3 87.6 H15.3" stroke-width="1.4"/><path d="M9.95 88 V94.2 M12.65 88 V94.2 M7.3 90.3 H15.3 M7.3 92.3 H15.3" stroke-width="0.6"/></g>
<g fill="none" stroke="#8a8a8a" stroke-width="0.8"><path d="M6.4 111.2 L7.6 109.8 H10.2 V114.4 H7.6 L6.4 113 Z"/><rect x="12.1" y="107.3" width="3.5" height="9"/><path d="M12.1 110.3 H15.6 M12.1 113.3 H15.6 M10.2 110.6 L12.1 108.8 M10.2 112.1 H12.1 M10.2 113.6 L12.1 115"/></g>
<g fill="none" stroke="#8a8a8a" stroke-width="0.8"><path d="M8.2 134.5 V129.2 H11.6 L14.6 132.2 V137.4 H13.2"/><path d="M11 129.2 V132.4 H14.6" stroke-width="0.7"/></g><text x="5.8" y="137.8" font-size="3.4" font-weight="bold" fill="#8a8a8a" textLength="7" lengthAdjust="spacingAndGlyphs">DAX</text>
<g fill="none" stroke="#444" stroke-width="0.8"><ellipse cx="1015.5" cy="64.6" rx="3.3" ry="1.2"/><path d="M1012.2 64.6 V70.5 C1012.2 71.5 1018.8 71.5 1018.8 70.5 V64.6"/></g>
<g><path d="M1011.8 89 V84 H1014 V81 H1016.5 V89 Z" fill="none" stroke="#444" stroke-width="0.8"/><rect x="1016.3" y="84.5" width="3.2" height="4.8" rx="0.8" fill="#fff" stroke="#e8901a" stroke-width="0.8"/></g>
<g><path d="M1011.8 105 V100 H1014 V97.5 H1016.5 V101" fill="none" stroke="#444" stroke-width="0.8"/><path d="M1014.5 105.5 L1019.5 100" stroke="#1e73c8" stroke-width="1.5"/></g>
<path d="M1012.8 114 H1017.8 V122.5 L1015.3 120.5 L1012.8 122.5 Z" fill="none" stroke="#444" stroke-width="0.8"/>
<g><rect x="1015" y="131" width="4.5" height="4.5" fill="#f7c469" stroke="#e8901a" stroke-width="0.6"/><rect x="1011.8" y="133" width="5.5" height="4.2" fill="#fff" stroke="#444" stroke-width="0.8"/><path d="M1016 134 L1019.8 138.5 L1017.8 138.2 L1016.8 140 Z" fill="#fff" stroke="#444" stroke-width="0.7"/></g>
<path d="M1015.5 148.8 V156.8 M1011.5 152.8 H1019.5" stroke="#444" stroke-width="0.8"/>
<path d="M998.6 66 L995.9 68.8 L998.6 71.6 M1001.3 66 L998.6 68.8 L1001.3 71.6" fill="none" stroke="#2b2b2b" stroke-width="0.95"/>
<path d="M1001.6 80.4 V87.4 L998.2 84.4 H995.8 V83.4 H998.2 Z" fill="none" stroke="#2b2b2b" stroke-width="0.9" stroke-linejoin="round"/>
<text x="0" y="0" font-size="7.4" fill="#252423" stroke="#252423" stroke-width="0.35" textLength="22.5" lengthAdjust="spacingAndGlyphs" transform="translate(995.5 91.3) rotate(90)">Filters</text>
<g fill="none" stroke="#666" stroke-width="0.8"><rect x="28.2" y="548.2" width="10" height="6" fill="#fff"/><path d="M31.8 556 H34.6 M33.2 554.2 V556"/></g>
<rect x="27.3" y="558.8" width="13" height="2" fill="#117865" rx="1"/>
<rect x="53.6" y="546.9" width="7" height="10.4" rx="1.2" fill="#fff" stroke="#777" stroke-width="0.8"/><path d="M56.4 555.8 H57.8" stroke="#777" stroke-width="0.7"/>
<path d="M74 552 L72.8 553.5 L74 555 M84 552 L85.2 553.5 L84 555" fill="none" stroke="#bbb" stroke-width="0.7"/>
<rect x="89.5" y="544.5" width="0.8" height="18" fill="#e1dfdd" />
<rect x="166.0" y="544.5" width="0.8" height="18" fill="#e1dfdd" />
<rect x="304.25" y="544.5" width="0.8" height="18" fill="#e1dfdd" />
<rect x="443.0" y="544.5" width="0.8" height="18" fill="#e1dfdd" />
<rect x="548.5" y="544.5" width="0.8" height="18" fill="#e1dfdd" />
<rect x="644.0" y="544.5" width="0.8" height="18" fill="#e1dfdd" />
<text x="101" y="556.41" font-size="7" fill="#3b3a39" textLength="54.1" lengthAdjust="spacingAndGlyphs">Executive Summary</text>
<text x="177" y="556.41" font-size="7" fill="#3b3a39" textLength="117" lengthAdjust="spacingAndGlyphs">Workforce Demographics &amp; Composition</text>
<text x="315.5" y="556.41" font-size="7" fill="#3b3a39" textLength="117" lengthAdjust="spacingAndGlyphs">Performance, Engagement, &amp; Satisfaction</text>
<text x="454.25" y="556.41" font-size="7" fill="#3b3a39" textLength="83.5" lengthAdjust="spacingAndGlyphs">Attrition &amp; Retention Analysis</text>
<text x="655" y="556.41" font-size="7" fill="#3b3a39" textLength="89.5" lengthAdjust="spacingAndGlyphs">Training &amp; Career Development</text>
<text x="559.5" y="556.41" font-size="7" font-weight="bold" fill="#252423" textLength="74" lengthAdjust="spacingAndGlyphs">Compensation &amp; Benefits</text>
<rect x="549" y="560.5" width="95.5" height="2" fill="#117865" />
<rect x="755.8" y="544.3" width="21" height="18.2" fill="#117865" />
<path d="M766.3 550.2 V556.6 M763.1 553.4 H769.5" stroke="#fff" stroke-width="1.6"/>
<g transform="translate(1015.6 554.6)"><path d="M-1.19 -5.58 L1.19 -5.58 L1.85 -3.20 L4.24 -3.81 L5.42 -1.76 L3.70 0.00 L5.42 1.76 L4.24 3.81 L1.85 3.20 L1.19 5.58 L-1.19 5.58 L-1.85 3.20 L-4.24 3.81 L-5.42 1.76 L-3.70 0.00 L-5.42 -1.76 L-4.24 -3.81 L-1.85 -3.20 Z" fill="none" stroke="#444" stroke-width="0.85" stroke-linejoin="round"/><circle r="1.7" fill="none" stroke="#444" stroke-width="0.85"/></g>
<text x="2.30" y="572.51" font-size="7.0" fill="#505050" text-anchor="start" textLength="31.80" lengthAdjust="spacingAndGlyphs" >Page 5 of 6</text>
<path d="M911.5 569.5 H913.5" stroke="#555" stroke-width="0.7"/>
<rect x="916" y="569" width="53.3" height="0.7" fill="#888" />
<rect x="944.3" y="566.5" width="1.6" height="5" fill="#444" />
<path d="M972.5 569.3 H976 M974.25 567.5 V571" stroke="#555" stroke-width="0.7"/>
<text x="983.50" y="571.71" font-size="7.0" fill="#666" text-anchor="start" textLength="15.00" lengthAdjust="spacingAndGlyphs" >125%</text>
<rect x="1005.8" y="566.3" width="9" height="6.2" fill="none" stroke="#555" stroke-width="0.8"/><rect x="1007.3" y="567.6" width="6" height="3.6" fill="#555" opacity="0.35"/>
</svg>
</body></html>
